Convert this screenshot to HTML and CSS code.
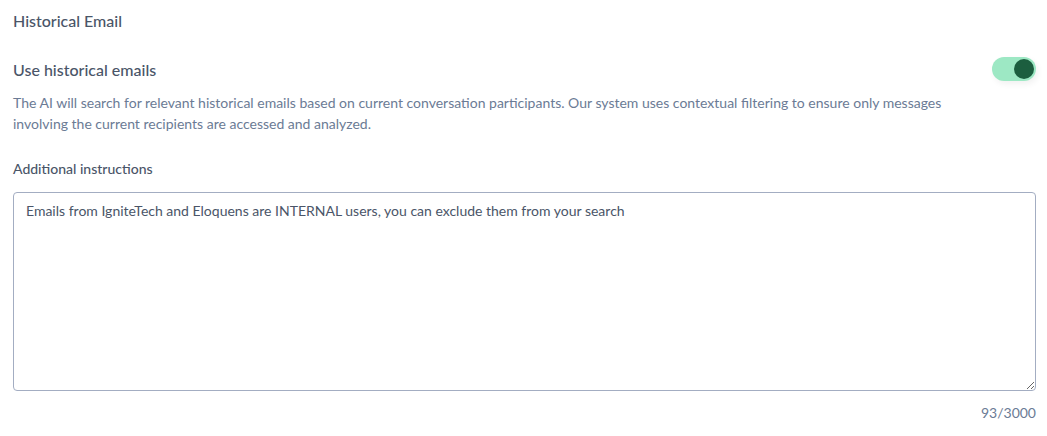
FILE: index.html
```html
<!DOCTYPE html>
<html lang="en">
<head>
    <meta charset="UTF-8">
    <meta name="viewport" content="width=device-width, initial-scale=1.0">
    <title>Historical Email</title>
    <link rel="stylesheet" href="styles.css">
</head>
<body>
    <div class="section">
        <h3 class="section-title">Historical Email</h3>

        <div class="setting-row">
            <span class="setting-label">Use historical emails</span>
            <label class="toggle">
                <input type="checkbox" checked>
                <span class="toggle-track"><span class="toggle-knob"></span></span>
            </label>
        </div>
        <p class="setting-help">The AI will search for relevant historical emails based on current conversation participants. Our system uses contextual filtering to ensure only messages involving the current recipients are accessed and analyzed.</p>

        <label class="field-label" for="instructions">Additional instructions</label>
        <textarea id="instructions" class="field-input">Emails from IgniteTech and Eloquens are INTERNAL users, you can exclude them from your search</textarea>
        <div class="char-count">93/3000</div>
    </div>
</body>
</html>
```

FILE: styles.css
```css
body {
    font-family: Lato, 'Open Sans', sans-serif;
    color: #4a5568;
    margin: 0;
    padding: 0 11px 0 13px;
    background-color: #fff;
}
.section {
    padding-top: 11px;
}
.section-title {
    font-size: 16px;
    font-weight: 500;
    line-height: 20px;
    margin: 0 0 25px;
    color: #4a5568;
}
.setting-row {
    display: flex;
    justify-content: space-between;
    align-items: center;
    height: 26px;
}
.setting-label {
    font-size: 16px;
    font-weight: 500;
    color: #4a5568;
}
.toggle input {
    display: none;
}
.toggle-track {
    display: flex;
    align-items: center;
    justify-content: flex-end;
    width: 44px;
    height: 24px;
    padding: 0 2px;
    box-sizing: border-box;
    border-radius: 12px;
    background-color: #9de8c4;
    box-shadow: 2px 3px 6px rgba(0, 0, 0, 0.06);
}
.toggle-knob {
    width: 20px;
    height: 20px;
    border-radius: 50%;
    background-color: #1c5e3f;
}
.setting-help {
    font-size: 14px;
    line-height: 21px;
    color: #6b7b95;
    margin: 10px 0 0;
    max-width: 980px;
}
.field-label {
    display: block;
    font-size: 14px;
    font-weight: 500;
    color: #4a5568;
    margin-top: 26px;
    line-height: 18px;
}
.field-input {
    display: block;
    width: 100%;
    height: 199px;
    margin-top: 14px;
    box-sizing: border-box;
    border: 1px solid #a3adc2;
    border-radius: 4px;
    padding: 9px 12px;
    font-family: Lato, 'Open Sans', sans-serif;
    font-size: 14px;
    line-height: 18px;
    color: #4a5568;
    resize: vertical;
}
.char-count {
    text-align: right;
    font-size: 14px;
    color: #6b7b95;
    margin-top: 13px;
}
```
